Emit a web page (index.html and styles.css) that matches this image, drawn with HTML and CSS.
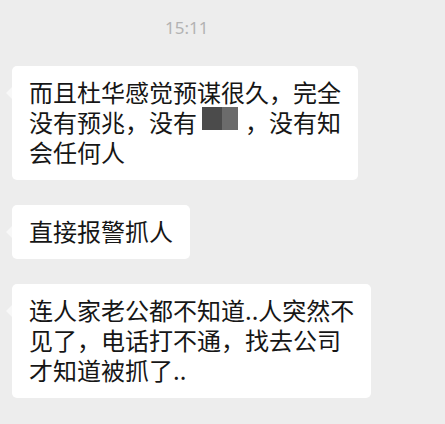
FILE: index.html
```html
<!DOCTYPE html>
<html lang="zh-CN">
<head>
    <meta charset="UTF-8">
    <meta name="viewport" content="width=device-width, initial-scale=1.0">
    <title>聊天记录</title>
    <link rel="stylesheet" href="styles.css">
</head>
<body>
    <div class="chat">
        <div class="time">15:11</div>

        <div class="msg">
            <div class="bubble">而且杜华感觉预谋很久，完全<br>没有预兆，没有<span class="mosaic"><span class="tile dark"></span><span class="tile light"></span></span>，没有知<br>会任何人</div>
        </div>

        <div class="msg">
            <div class="bubble">直接报警抓人</div>
        </div>

        <div class="msg">
            <div class="bubble">连人家老公都不知道..人突然不<br>见了，电话打不通，找去公司<br>才知道被抓了..</div>
        </div>
    </div>
</body>
</html>
```

FILE: styles.css
```css
body {
    margin: 0;
    padding: 0;
    background: #ededed;
    font-family: "Noto Sans CJK SC", "Noto Sans", sans-serif;
}
.chat {
    display: flex;
    flex-direction: column;
    gap: 25px;
    padding: 0 0 20px 12px;
}
.time {
    margin: 18px 0 3px 153px;
    font-family: "Noto Sans", "Liberation Sans", sans-serif;
    font-size: 17px;
    line-height: 20px;
    color: #b3b3b3;
}
.msg {
    display: flex;
}
.bubble {
    position: relative;
    background: #ffffff;
    border-radius: 5px;
    padding: 11px 17px 13px;
    font-size: 24px;
    line-height: 30px;
    color: #161616;
    white-space: nowrap;
}
.bubble::before {
    content: '';
    position: absolute;
    left: -6px;
    top: 21px;
    border-top: 6px solid transparent;
    border-bottom: 6px solid transparent;
    border-right: 6px solid #f8f8f8;
}
.mosaic {
    display: inline-flex;
    vertical-align: top;
    width: 48px;
    height: 23px;
    padding-left: 5px;
    box-sizing: border-box;
}
.tile {
    height: 100%;
}
.tile.dark {
    width: 20px;
    background: #4b4b4b;
}
.tile.light {
    width: 16px;
    background: #6b6b6b;
}
```
